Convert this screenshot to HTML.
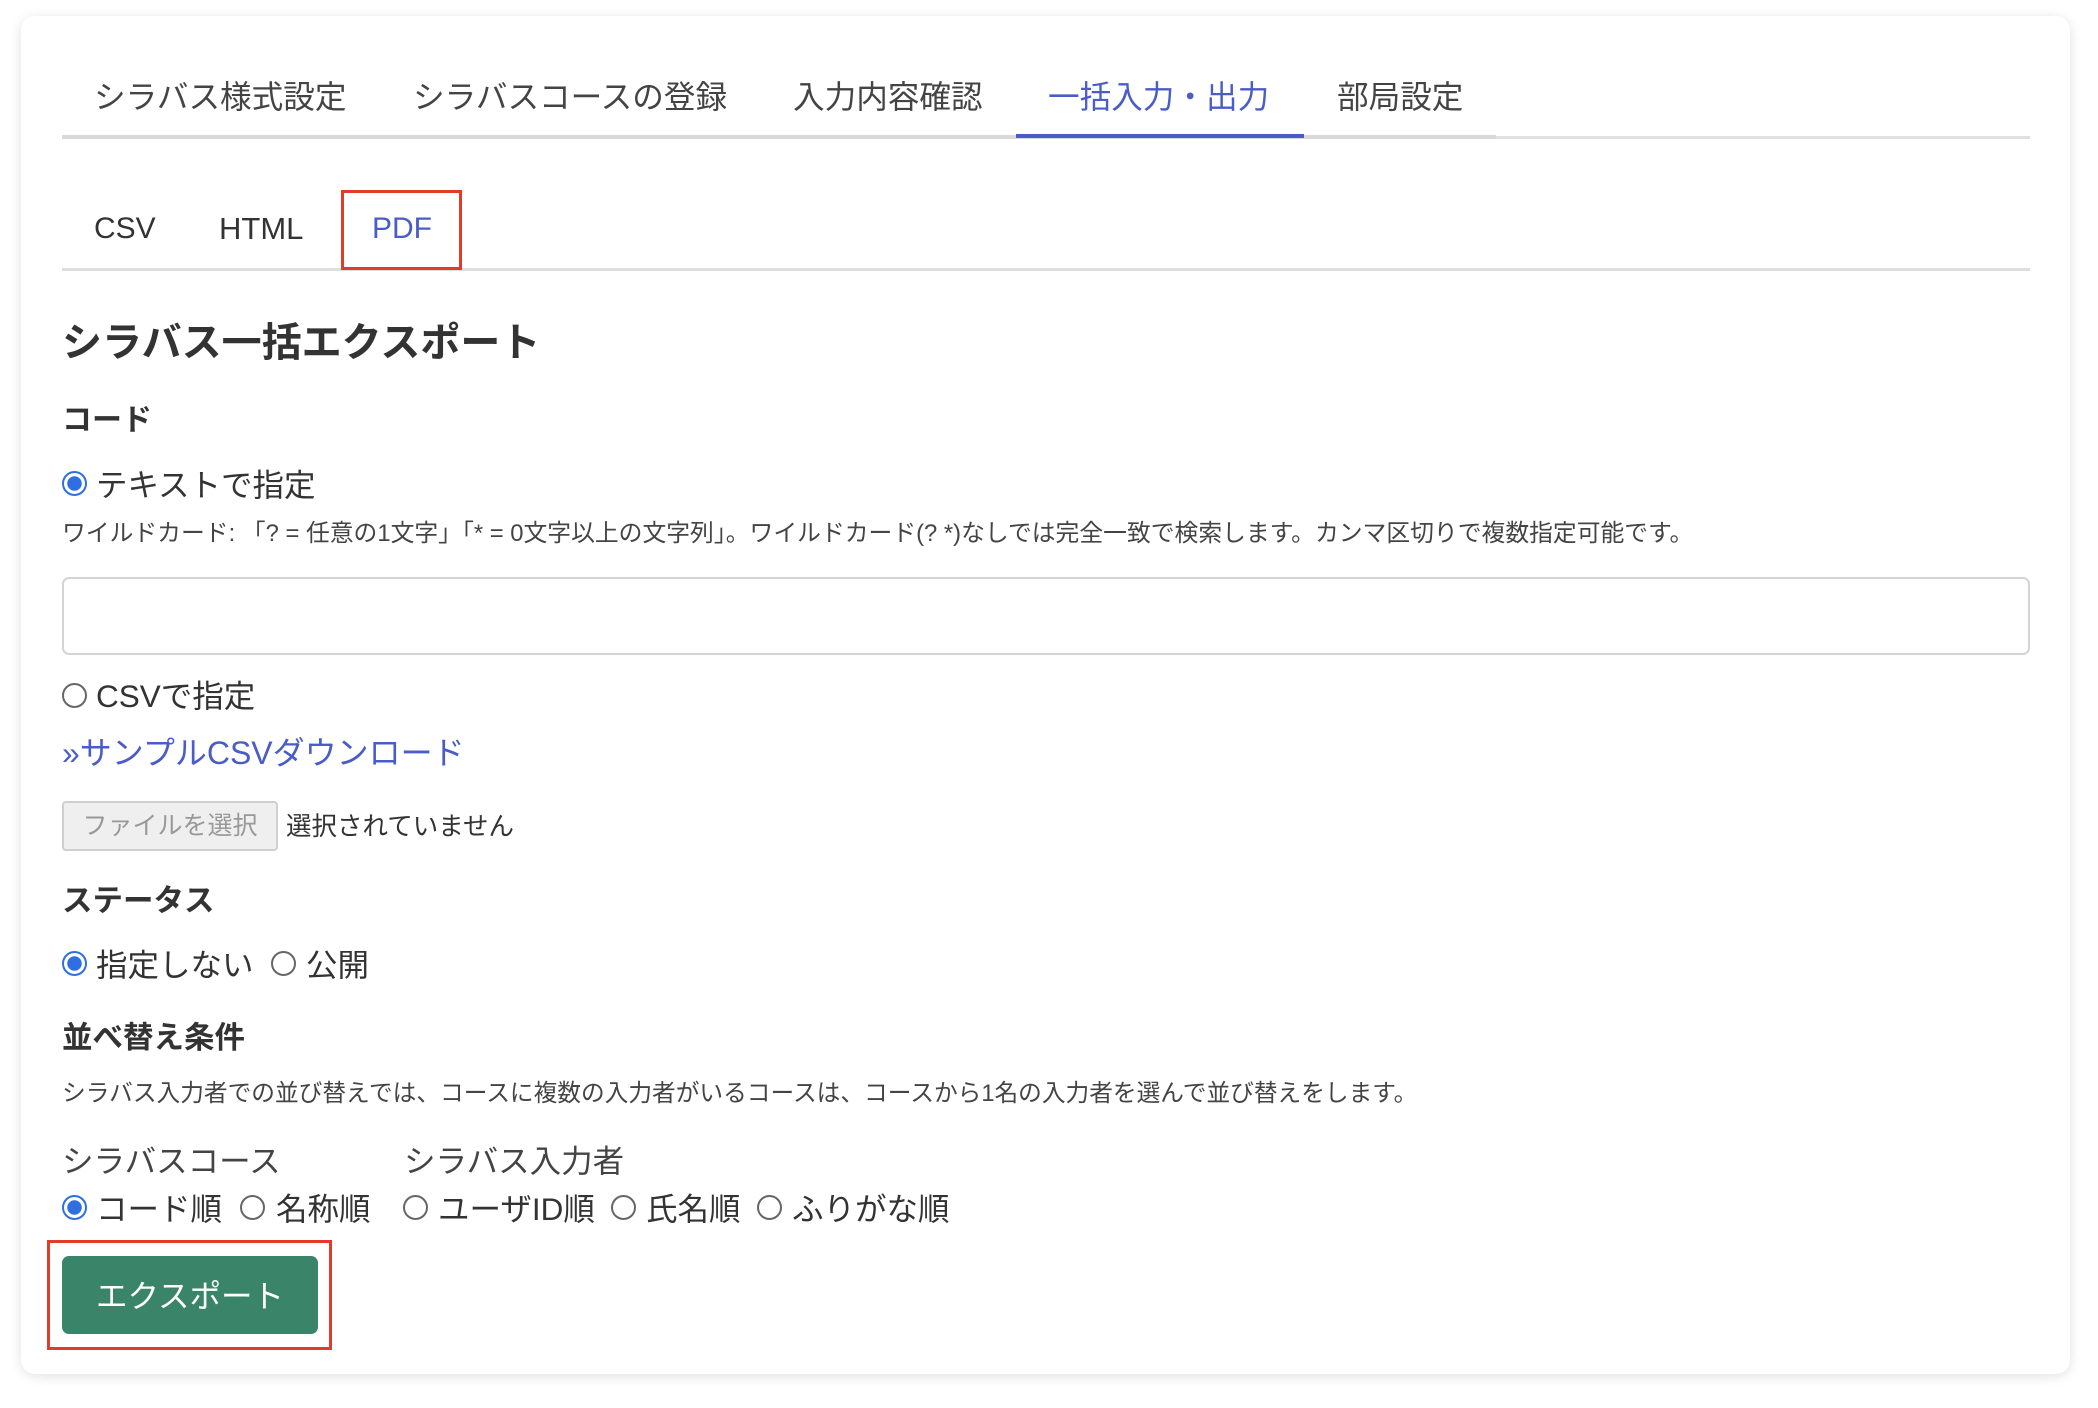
<!DOCTYPE html>
<html><head><meta charset="utf-8"><style>
*{margin:0;padding:0;box-sizing:border-box}
body{width:2098px;height:1408px;background:#fff;position:relative;overflow:hidden;font-family:"Liberation Sans","Noto Sans CJK JP",sans-serif;color:#333}
.card{position:absolute;left:21px;top:16px;width:2049px;height:1358px;background:#fff;border-radius:14px;box-shadow:0 2px 12px rgba(0,0,0,.12)}
.t{position:absolute;white-space:nowrap;line-height:40px}
.rad{position:absolute;width:25px;height:25px;border:2px solid #666;border-radius:50%;background:#fff}
.rad.on{border:2px solid #2f6fe0;background:radial-gradient(circle,#2f6fe0 0 7px,#fff 7.5px)}
</style></head><body>
<div class="card"></div>
<div class="t" style="left:94px;top:77px;font-size:31.6px;color:#444">シラバス様式設定</div>
<div class="t" style="left:413px;top:77px;font-size:31.6px;color:#444">シラバスコースの登録</div>
<div class="t" style="left:793px;top:77px;font-size:31.6px;color:#444">入力内容確認</div>
<div class="t" style="left:1048px;top:77px;font-size:31.6px;color:#4a5cc8">一括入力・出力</div>
<div class="t" style="left:1337px;top:77px;font-size:31.6px;color:#444">部局設定</div>
<div style="position:absolute;left:62px;top:135px;width:1434px;height:4px;background:#d9d9d9"></div>
<div style="position:absolute;left:1496px;top:136px;width:534px;height:3px;background:#e0e0e0"></div>
<div style="position:absolute;left:1016px;top:134px;width:288px;height:4px;background:#4a5cc8"></div>
<div class="t" style="left:94px;top:209px;font-size:30px;color:#333">CSV</div>
<div class="t" style="left:219px;top:209px;font-size:31px;color:#333">HTML</div>
<div class="t" style="left:372px;top:209px;font-size:30px;color:#4a5cc8">PDF</div>
<div style="position:absolute;left:62px;top:268px;width:1968px;height:3px;background:#dedede"></div>
<div style="position:absolute;left:341px;top:190px;width:121px;height:80px;border:3px solid #e23b2a"></div>
<div class="t" style="left:62px;top:323px;font-size:40px;font-weight:bold;color:#333">シラバス一括エクスポート</div>
<div class="t" style="left:62px;top:401px;font-size:30px;font-weight:bold">コード</div>
<div class="rad on" style="left:62px;top:471px"></div>
<div class="t" style="left:96px;top:465px;font-size:31.5px">テキストで指定</div>
<div class="t" style="left:62px;top:514px;font-size:23.8px;color:#444">ワイルドカード: 「? = 任意の1文字」「* = 0文字以上の文字列」。ワイルドカード(? *)なしでは完全一致で検索します。カンマ区切りで複数指定可能です。</div>
<div style="position:absolute;left:62px;top:577px;width:1968px;height:78px;border:2px solid #d4d4d4;border-radius:7px"></div>
<div class="rad" style="left:62px;top:683px"></div>
<div class="t" style="left:96px;top:676px;font-size:31.5px">CSVで指定</div>
<div class="t" style="left:62px;top:733px;font-size:32px;color:#4a5cc8">»サンプルCSVダウンロード</div>
<div style="position:absolute;left:62px;top:801px;width:216px;height:50px;border:2px solid #cfcfcf;border-radius:4px;background:#efefef;color:#999;font-size:25px;line-height:46px;text-align:center">ファイルを選択</div>
<div class="t" style="left:286px;top:807px;font-size:25.5px">選択されていません</div>
<div class="t" style="left:62px;top:881px;font-size:30.5px;font-weight:bold">ステータス</div>
<div class="rad on" style="left:62px;top:951px"></div>
<div class="t" style="left:96px;top:945px;font-size:31.5px">指定しない</div>
<div class="rad" style="left:271px;top:951px"></div>
<div class="t" style="left:306px;top:945px;font-size:31.5px">公開</div>
<div class="t" style="left:62px;top:1018px;font-size:30.5px;font-weight:bold">並べ替え条件</div>
<div class="t" style="left:62px;top:1074px;font-size:23.7px;color:#444">シラバス入力者での並び替えでは、コースに複数の入力者がいるコースは、コースから1名の入力者を選んで並び替えをします。</div>
<div class="t" style="left:62px;top:1141px;font-size:31.5px;color:#444">シラバスコース</div>
<div class="t" style="left:404px;top:1141px;font-size:31.5px;color:#444">シラバス入力者</div>
<div class="rad on" style="left:62px;top:1195px"></div>
<div class="t" style="left:96px;top:1189px;font-size:31.5px">コード順</div>
<div class="rad" style="left:240px;top:1195px"></div>
<div class="t" style="left:276px;top:1189px;font-size:31.5px">名称順</div>
<div class="rad" style="left:403px;top:1195px"></div>
<div class="t" style="left:438px;top:1189px;font-size:31.5px">ユーザID順</div>
<div class="rad" style="left:611px;top:1195px"></div>
<div class="t" style="left:646px;top:1189px;font-size:31.5px">氏名順</div>
<div class="rad" style="left:757px;top:1195px"></div>
<div class="t" style="left:792px;top:1189px;font-size:31.5px">ふりがな順</div>
<div style="position:absolute;left:47px;top:1240px;width:285px;height:110px;border:3px solid #e23b2a"></div>
<div style="position:absolute;left:62px;top:1256px;width:256px;height:78px;background:#3a8469;border-radius:7px;color:#fff;font-size:31.5px;line-height:80px;text-align:center">エクスポート</div>
</body></html>
